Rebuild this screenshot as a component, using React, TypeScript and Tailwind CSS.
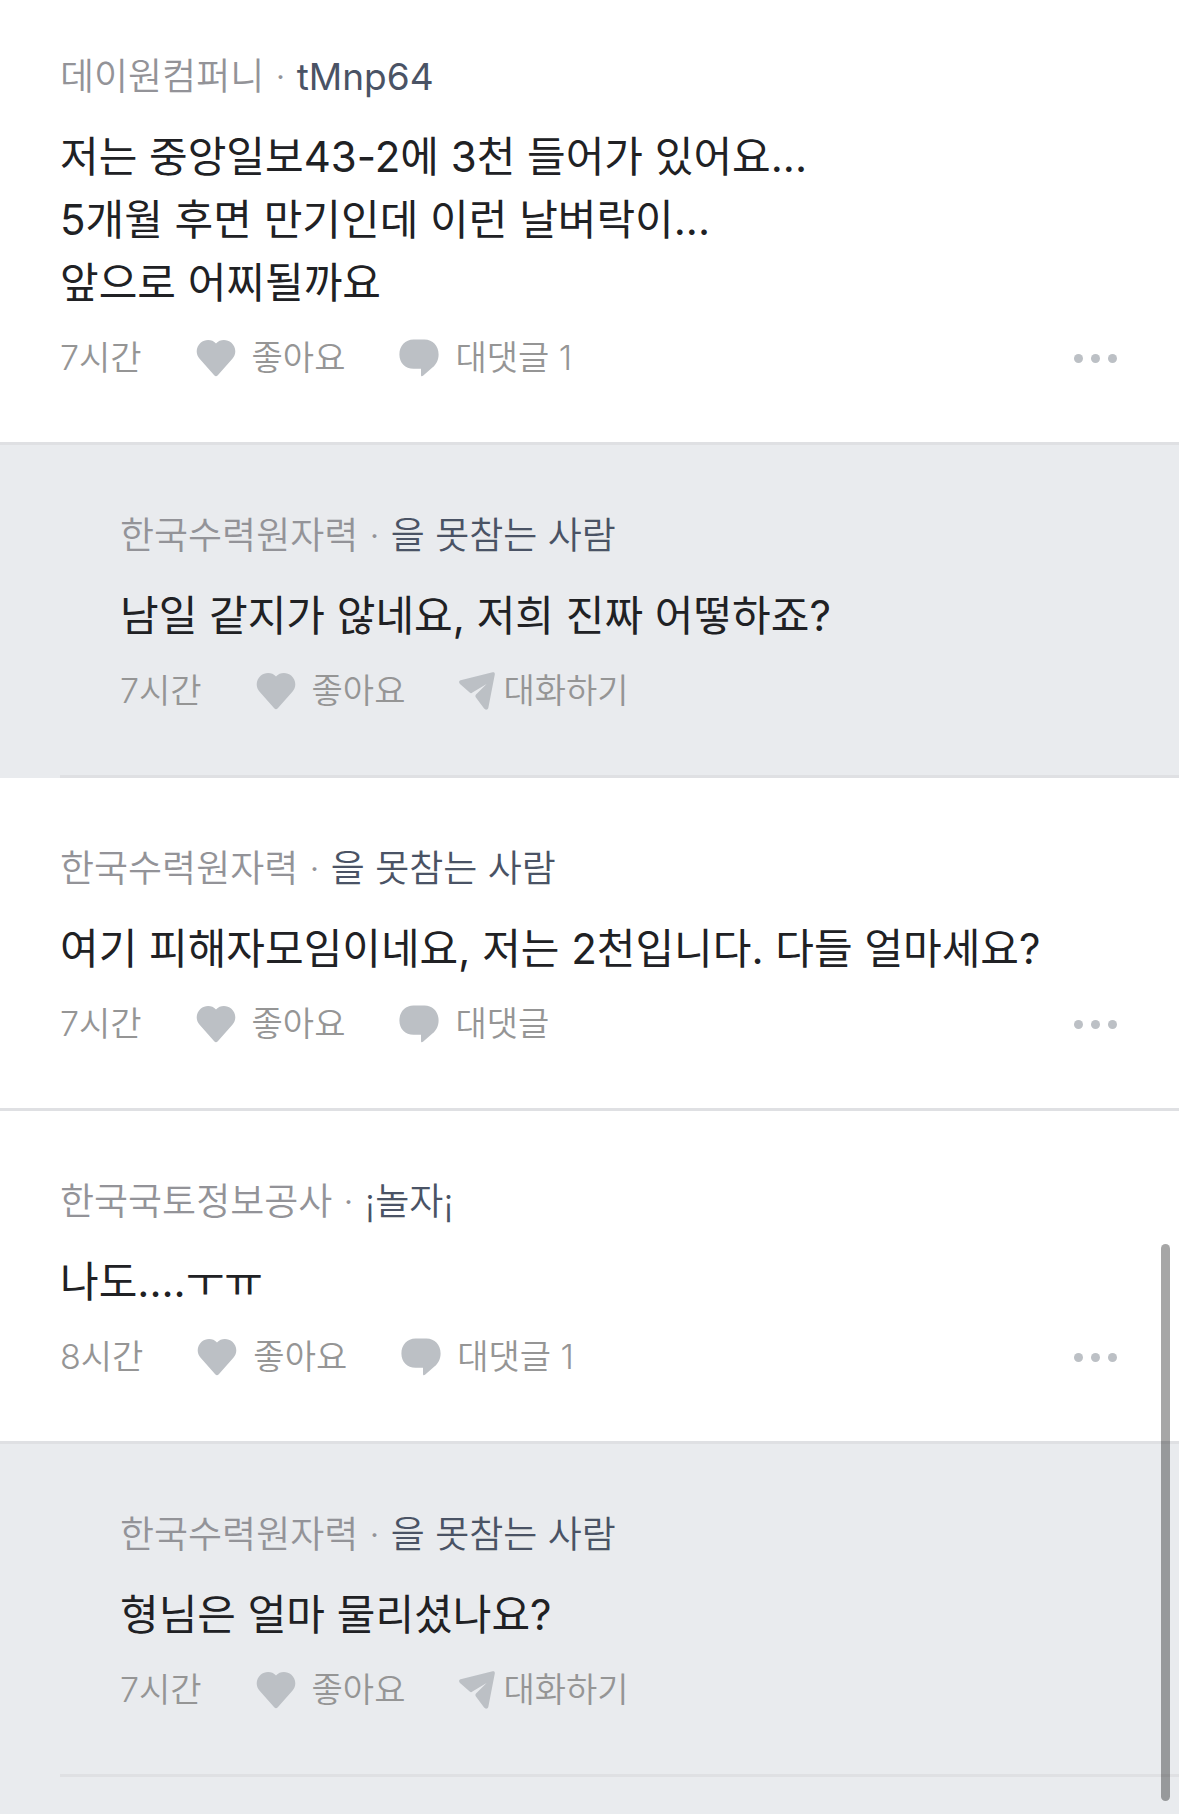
import type { ReactNode } from 'react'

interface Comment {
  id: number
  company: string
  nickname: string
  lines: string[]
  time: string
  replies?: string
  isReply?: boolean
}

const comments: Comment[] = [
  {
    id: 1,
    company: '데이원컴퍼니',
    nickname: 'tMnp64',
    lines: ['저는 중앙일보43-2에 3천 들어가 있어요...', '5개월 후면 만기인데 이런 날벼락이...', '앞으로 어찌될까요'],
    time: '7시간',
    replies: '대댓글 1',
  },
  {
    id: 2,
    company: '한국수력원자력',
    nickname: '을 못참는 사람',
    lines: ['남일 같지가 않네요, 저희 진짜 어떻하죠?'],
    time: '7시간',
    isReply: true,
  },
  {
    id: 3,
    company: '한국수력원자력',
    nickname: '을 못참는 사람',
    lines: ['여기 피해자모임이네요, 저는 2천입니다. 다들 얼마세요?'],
    time: '7시간',
    replies: '대댓글',
  },
  {
    id: 4,
    company: '한국국토정보공사',
    nickname: '¡놀자¡',
    lines: ['나도....ㅜㅠ'],
    time: '8시간',
    replies: '대댓글 1',
  },
  {
    id: 5,
    company: '한국수력원자력',
    nickname: '을 못참는 사람',
    lines: ['형님은 얼마 물리셨나요?'],
    time: '7시간',
    isReply: true,
  },
]

function HeartIcon() {
  return (
    <svg viewBox="0 0 40 38" className="h-[38px] w-10 fill-[#bcc0c5]" aria-hidden="true">
      <path d="M20 4.4C16 0 9.2-.2 4.6 3.8C-.2 8.2-.6 15 3.6 19.8L18.2 36.2C19.4 37.6 20.6 37.6 21.8 36.2L36.4 19.8C40.6 15 40.2 8.2 35.4 3.8C30.8-.2 24 0 20 4.4Z" />
    </svg>
  )
}

function BubbleIcon() {
  return (
    <svg viewBox="0 0 40 38" className="h-[38px] w-10 fill-[#bcc0c5]" aria-hidden="true">
      <path d="M14.5 .6H25.5C33.8 .6 39.6 7 39.6 15.4C39.6 21 37.2 25.3 33.4 28.6L24 36.8C22.9 37.7 22 37.3 22 36V29.8H14.5C6.2 29.8 .4 23.8 .4 15.4C.4 7 6.2 .6 14.5 .6Z" />
    </svg>
  )
}

function SendIcon() {
  return (
    <svg viewBox="0 0 36 38" className="h-[38px] w-9 fill-[#bcc0c5]" aria-hidden="true">
      <path d="M1.6 8.2L33.6.3C35.2 0 36 .8 35.8 2.4L29.4 35.4C28.9 37.9 26.5 38.4 25.1 36.5L16.9 25.4C16.2 24.4 16.2 23.5 17 22.5L27.6 11.9L13.4 20.6C12.4 21.3 11.6 21.3 10.7 20.6L1 11.9C-.4 10.6-.1 8.8 1.6 8.2Z" />
    </svg>
  )
}

function Action({ children, className = '' }: { children: ReactNode; className?: string }) {
  return (
    <button type="button" className={`flex cursor-pointer items-center ${className}`}>
      {children}
    </button>
  )
}

function CommentItem({ comment }: { comment: Comment }) {
  const { company, nickname, lines, time, replies, isReply, id } = comment
  // latin-only names look too thin next to hangul at the lighter weight
  const isLatin = /^\w+$/.test(nickname)

  return (
    <li className={isReply ? 'bg-[#e9ebee]' : 'bg-white'}>
      <article className={`pr-15 pb-16 ${id === 1 ? 'pt-12' : 'pt-[62px]'} ${isReply ? 'pl-30' : 'pl-15'}`}>
        <header className="flex items-center text-[37px] leading-[58px] font-[350] text-[#939398]">
          <span>{company}</span>
          <span className="mx-[11px]">·</span>
          <span className={`text-[#4a5365] ${isLatin ? 'font-normal' : ''}`}>{nickname}</span>
        </header>
        <div className="mt-[19px] text-[42px] leading-[63px] text-[#202124]">
          {lines.map((line) => (
            <p key={line}>{line}</p>
          ))}
        </div>
        <footer className="mt-6 flex h-10 items-center text-[34px] leading-10 font-[350] text-[#959595]">
          <time className="mr-[54px]">{time}</time>
          <Action className="mr-[54px] gap-4">
            <HeartIcon />
            좋아요
          </Action>
          {isReply ? (
            <Action className="gap-2">
              <SendIcon />
              대화하기
            </Action>
          ) : (
            <Action className="gap-4">
              <BubbleIcon />
              {replies}
            </Action>
          )}
          {!isReply && (
            <button type="button" aria-label="더보기" className="ml-auto flex cursor-pointer gap-2 pr-0.5">
              <span className="size-[9px] rounded-full bg-[#bcc0c5]" />
              <span className="size-[9px] rounded-full bg-[#bcc0c5]" />
              <span className="size-[9px] rounded-full bg-[#bcc0c5]" />
            </button>
          )}
        </footer>
      </article>
      <hr className={`border-t-3 border-[#dfe0e3] ${isReply ? 'ml-15' : ''}`} />
    </li>
  )
}

export default function App() {
  return (
    <main className="flex min-h-screen flex-col bg-[#e9ebee] font-['Inter','Noto_Sans_CJK_KR',sans-serif]">
      <ul>
        {comments.map((comment) => (
          <CommentItem key={comment.id} comment={comment} />
        ))}
      </ul>
      <div className="fixed right-[9px] bottom-[13px] h-[557px] w-[9px] rounded-full bg-black/35" />
    </main>
  )
}
